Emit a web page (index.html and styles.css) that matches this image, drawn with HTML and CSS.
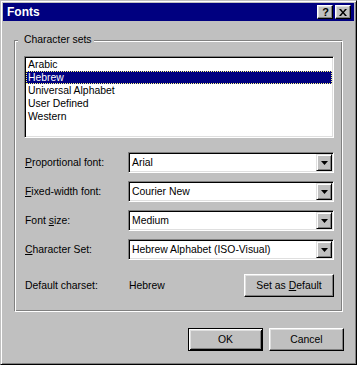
FILE: index.html
```html
<!DOCTYPE html>
<html>
<head>
<meta charset="utf-8">
<link rel="stylesheet" href="styles.css">
</head>
<body>
<div class="window">
  <div class="titlebar">
    <span class="title">Fonts</span>
    <span class="tbtn help">?</span>
    <span class="tbtn close"><svg width="8" height="7" viewBox="0 0 8 7"><path d="M0 0h2l2 2.5 2-2.5h2L5 3.5 8 7H6L4 4.5 2 7H0l3-3.5z"/></svg></span>
  </div>
  <div class="group">
    <span class="legend">Character sets</span>
    <div class="listbox">
      <div class="item">Arabic</div>
      <div class="item sel">Hebrew</div>
      <div class="item">Universal Alphabet</div>
      <div class="item">User Defined</div>
      <div class="item">Western</div>
    </div>
    <div class="form">
      <span class="label"><span><u>P</u>roportional font:</span></span>
      <div class="combo"><span class="val">Arial</span><span class="drop"><svg width="7" height="4" viewBox="0 0 7 4"><path d="M0 0h7L3.5 4z"/></svg></span></div>
      <span class="label"><span><u>F</u>ixed-width font:</span></span>
      <div class="combo"><span class="val">Courier New</span><span class="drop"><svg width="7" height="4" viewBox="0 0 7 4"><path d="M0 0h7L3.5 4z"/></svg></span></div>
      <span class="label"><span>Font <u>s</u>ize:</span></span>
      <div class="combo"><span class="val">Medium</span><span class="drop"><svg width="7" height="4" viewBox="0 0 7 4"><path d="M0 0h7L3.5 4z"/></svg></span></div>
      <span class="label"><span><u>C</u>haracter Set:</span></span>
      <div class="combo"><span class="val">Hebrew Alphabet (ISO-Visual)</span><span class="drop"><svg width="7" height="4" viewBox="0 0 7 4"><path d="M0 0h7L3.5 4z"/></svg></span></div>
      <span class="label last"><span>Default charset:</span></span>
      <div class="defrow">
        <span class="defval">Hebrew</span>
        <span class="btn setdef"><span>Set as <u>D</u>efault</span></span>
      </div>
    </div>
  </div>
  <div class="actions">
    <span class="btn ok"><span>OK</span></span>
    <span class="btn"><span>Cancel</span></span>
  </div>
</div>
</body>
</html>
```
FILE: styles.css
```css
* { box-sizing: border-box; }
html, body { margin: 0; padding: 0; background: #c0c0c0; }
body {
  font-family: "Liberation Sans", Arial, sans-serif;
  font-size: 10.4px;
  color: #000;
}
.window {
  width: 357px;
  height: 365px;
  border: 1px solid;
  border-color: #c0c0c0 #000 #000 #c0c0c0;
  box-shadow: inset 1px 1px #fff, inset -1px -1px #808080;
  padding: 2px;
  background: #c0c0c0;
}
.titlebar {
  height: 18px;
  background: #000080;
  display: flex;
  align-items: center;
  padding: 0 3px 0 3px;
}
.title {
  flex: 1;
  color: #fff;
  font-weight: bold;
  font-size: 12px;
  padding-left: 1px;
}
.tbtn {
  width: 16px;
  height: 14px;
  background: #c0c0c0;
  border: 1px solid;
  border-color: #fff #000 #000 #fff;
  box-shadow: inset -1px -1px #808080, inset 1px 1px #dfdfdf;
  display: flex;
  align-items: center;
  justify-content: center;
  font-weight: bold;
  font-size: 11px;
  line-height: 1;
}
.help { padding-left: 1px; }
.close { margin-left: 2px; padding-top: 1px; }
.close svg { display: block; }
.group {
  position: relative;
  margin: 19px 11px 0 11px;
  height: 272px;
  border: 1px solid;
  border-color: #808080 #fff #fff #808080;
  box-shadow: inset 1px 1px #fff, inset -1px -1px #808080;
  padding: 15px 8px 0 9px;
}
.legend {
  position: absolute;
  top: -8px;
  left: 3px;
  background: #c0c0c0;
  padding: 0 2px 0 6px;
  line-height: 14px;
}
.listbox {
  height: 82px;
  background: #fff;
  border: 1px solid;
  border-color: #808080 #fff #fff #808080;
  box-shadow: inset 1px 1px #000, inset -1px -1px #dfdfdf;
  padding: 1px;
}
.item {
  height: 13px;
  line-height: 13px;
  padding-left: 2px;
  white-space: nowrap;
}
.item.sel {
  background: #000080;
  color: #fff;
  outline: 1px dotted #ffff80;
  outline-offset: -1px;
}
.form {
  margin-top: 14px;
  display: grid;
  grid-template-columns: 104px 1fr;
  grid-auto-rows: 21px;
  row-gap: 8px;
}
.label {
  display: flex;
  align-items: center;
  padding-left: 1px;
  white-space: nowrap;
}
.label.last {
  margin-top: 6px;
  height: 23px;
}
.combo {
  display: flex;
  height: 21px;
  background: #fff;
  border: 1px solid;
  border-color: #808080 #fff #fff #808080;
  box-shadow: inset 1px 1px #000, inset -1px -1px #dfdfdf;
  padding: 1px;
}
.val {
  flex: 1;
  padding-left: 2px;
  line-height: 17px;
  white-space: nowrap;
}
.drop {
  width: 16px;
  height: 17px;
  background: #c0c0c0;
  border: 1px solid;
  border-color: #dfdfdf #000 #000 #dfdfdf;
  box-shadow: inset 1px 1px #fff, inset -1px -1px #808080;
  display: flex;
  align-items: center;
  justify-content: center;
}
.drop svg { display: block; }
.defrow {
  margin-top: 6px;
  height: 23px;
  display: flex;
  align-items: center;
}
.defval { padding-left: 1px; flex: 1; }
.btn {
  display: flex;
  align-items: center;
  justify-content: center;
  width: 75px;
  height: 23px;
  background: #c0c0c0;
  border: 1px solid;
  border-color: #fff #000 #000 #fff;
  box-shadow: inset -1px -1px #808080, inset 1px 1px #dfdfdf;
  white-space: nowrap;
}
.setdef { width: 90px; }
.ok {
  border-color: #000;
  box-shadow: inset 1px 1px #fff, inset -1px -1px #000, inset 2px 2px #dfdfdf, inset -2px -2px #808080;
}
.actions {
  display: flex;
  justify-content: flex-end;
  gap: 6px;
  margin-top: 16px;
  padding-right: 10px;
}
```
